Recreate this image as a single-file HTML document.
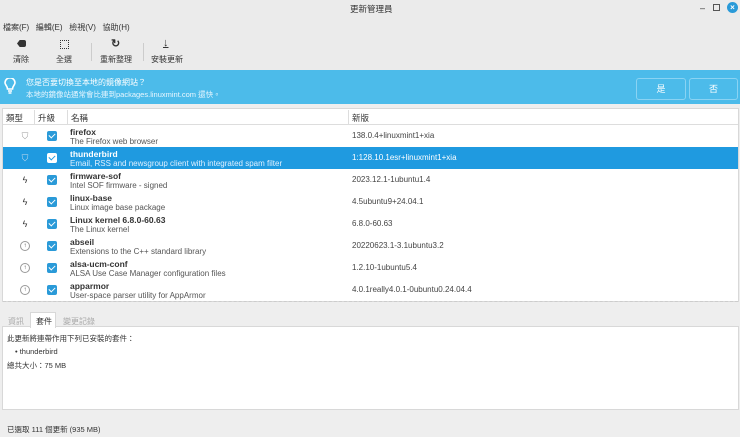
<!DOCTYPE html><html><head><meta charset="utf-8"><style>
*{margin:0;padding:0;box-sizing:border-box}
body{width:740px;height:437px;overflow:hidden;background:#eeeeee;font-family:"Liberation Sans","Noto Sans CJK TC",sans-serif;font-size:8px;color:#333;position:relative}
.a{position:absolute;white-space:nowrap}
.row{position:absolute;left:3px;width:735px;height:22px;background:#fff}
.row.sel{background:#1f9ae0;color:#fff}
.nm{position:absolute;left:67px;top:2px;font-weight:bold;font-size:8.5px}
.ds{position:absolute;left:67px;top:12px;font-size:8px;color:#555}
.sel .ds{color:#e0f0ff}
.vr{position:absolute;left:349px;top:6px;font-size:8px;color:#444}
.sel .vr{color:#fff}
.cb{position:absolute;left:44px;top:6px;width:10px;height:10px;background:#2a9ad8;border-radius:2px}
.sel .cb{background:#fff}
.cb:after{content:"";position:absolute;left:2.5px;top:1px;width:3px;height:5px;border:solid #fff;border-width:0 1.5px 1.5px 0;transform:rotate(45deg)}
.sel .cb:after{border-color:#1f9ae0}
.ic{position:absolute;left:17px;top:6px;width:10px;height:10px;font-size:9px;text-align:center;line-height:10px}
</style></head><body>
<div class="a" style="left:0;top:0;width:740px;height:70px;background:#ebebeb"></div>
<div class="a" style="left:350px;top:3px;font-size:8.5px">更新管理員</div>
<div class="a" style="left:700px;top:3px;font-size:9px">–</div>
<div class="a" style="left:713px;top:4px;width:7px;height:7px;border:1px solid #555"></div>
<div class="a" style="left:727px;top:2px;width:11px;height:11px;border-radius:50%;background:#2a9ad8;color:#fff;font-size:8px;text-align:center;line-height:11px;font-weight:bold">×</div>
<div class="a" style="left:3px;top:22px;font-size:8px">檔案(F)&nbsp;&nbsp;&nbsp;編輯(E)&nbsp;&nbsp;&nbsp;檢視(V)&nbsp;&nbsp;&nbsp;協助(H)</div>
<div class="a" style="left:17px;top:40px;width:9px;height:7px;background:#333;border-radius:1px 2px 2px 1px;clip-path:polygon(30% 0,100% 0,100% 100%,30% 100%,0 50%)"></div>
<div class="a" style="left:13px;top:54px">清除</div>
<div class="a" style="left:60px;top:40px;width:9px;height:9px;border:1px dotted #333"></div>
<div class="a" style="left:56px;top:54px">全選</div>
<div class="a" style="left:91px;top:43px;width:1px;height:18px;background:#ccc"></div>
<div class="a" style="left:111px;top:37px;font-size:11px;font-weight:bold">↻</div>
<div class="a" style="left:100px;top:54px">重新整理</div>
<div class="a" style="left:143px;top:43px;width:1px;height:18px;background:#ccc"></div>
<div class="a" style="left:163px;top:37px;font-size:11px;font-weight:bold;text-decoration:underline">↓</div>
<div class="a" style="left:151px;top:54px">安裝更新</div>
<div class="a" style="left:0;top:70px;width:740px;height:34px;background:#4cbbea"></div>
<svg class="a" style="left:4px;top:78px" width="12" height="16" viewBox="0 0 12 16"><path d="M3.5 11 C3.5 8 1 7 1 4.8 A5 5 0 0 1 11 4.8 C11 7 8.5 8 8.5 11 Z" fill="none" stroke="#fff" stroke-width="1.6"/><path d="M4 13h4M4.5 15h3" stroke="#fff" stroke-width="1.4"/></svg>
<div class="a" style="left:26px;top:77px;color:#fff;font-size:8px">您是否要切換至本地的鏡像網站？</div>
<div class="a" style="left:26px;top:89px;color:#eaf7ff;font-size:7.5px">本地的鏡像站通常會比連到packages.linuxmint.com 還快。</div>
<div class="a" style="left:636px;top:78px;width:50px;height:22px;border:1px solid #8ad3f3;border-radius:3px;color:#fff;text-align:center;line-height:20px;font-size:9px">是</div>
<div class="a" style="left:689px;top:78px;width:49px;height:22px;border:1px solid #8ad3f3;border-radius:3px;color:#fff;text-align:center;line-height:20px;font-size:9px">否</div>
<div class="a" style="left:2px;top:108px;width:737px;height:194px;background:#fff;border:1px solid #d8d8d8"></div>
<div class="a" style="left:3px;top:109px;width:735px;height:16px;border-bottom:1px solid #ddd"></div>
<div class="a" style="left:34px;top:110px;width:1px;height:14px;background:#ddd"></div>
<div class="a" style="left:67px;top:110px;width:1px;height:14px;background:#ddd"></div>
<div class="a" style="left:348px;top:110px;width:1px;height:14px;background:#ddd"></div>
<div class="a" style="left:6px;top:112px;font-size:8.5px">類型</div>
<div class="a" style="left:38px;top:112px;font-size:8.5px">升級</div>
<div class="a" style="left:71px;top:112px;font-size:8.5px">名稱</div>
<div class="a" style="left:352px;top:112px;font-size:8.5px">新版</div>
<div class="row" style="top:125px"><div class="ic" style="color:#999">⛉</div><div class="cb"></div><div class="nm">firefox</div><div class="ds">The Firefox web browser</div><div class="vr">138.0.4+linuxmint1+xia</div></div>
<div class="row sel" style="top:147px"><div class="ic" style="color:#cde">⛉</div><div class="cb"></div><div class="nm">thunderbird</div><div class="ds">Email, RSS and newsgroup client with integrated spam filter</div><div class="vr">1:128.10.1esr+linuxmint1+xia</div></div>
<div class="row" style="top:169px"><div class="ic">ϟ</div><div class="cb"></div><div class="nm">firmware-sof</div><div class="ds">Intel SOF firmware - signed</div><div class="vr">2023.12.1-1ubuntu1.4</div></div>
<div class="row" style="top:191px"><div class="ic">ϟ</div><div class="cb"></div><div class="nm">linux-base</div><div class="ds">Linux image base package</div><div class="vr">4.5ubuntu9+24.04.1</div></div>
<div class="row" style="top:213px"><div class="ic">ϟ</div><div class="cb"></div><div class="nm">Linux kernel 6.8.0-60.63</div><div class="ds">The Linux kernel</div><div class="vr">6.8.0-60.63</div></div>
<div class="row" style="top:235px"><div class="ic" style="border:1px solid #999;border-radius:50%;font-size:6px;line-height:8px">↑</div><div class="cb"></div><div class="nm">abseil</div><div class="ds">Extensions to the C++ standard library</div><div class="vr">20220623.1-3.1ubuntu3.2</div></div>
<div class="row" style="top:257px"><div class="ic" style="border:1px solid #999;border-radius:50%;font-size:6px;line-height:8px">↑</div><div class="cb"></div><div class="nm">alsa-ucm-conf</div><div class="ds">ALSA Use Case Manager configuration files</div><div class="vr">1.2.10-1ubuntu5.4</div></div>
<div class="row" style="top:279px"><div class="ic" style="border:1px solid #999;border-radius:50%;font-size:6px;line-height:8px">↑</div><div class="cb"></div><div class="nm">apparmor</div><div class="ds">User-space parser utility for AppArmor</div><div class="vr">4.0.1really4.0.1-0ubuntu0.24.04.4</div></div>
<div class="a" style="left:3px;top:301px;width:735px;border-top:1px dashed #ccc"></div>
<div class="a" style="left:2px;top:326px;width:737px;height:84px;background:#fff;border:1px solid #d8d8d8"></div>
<div class="a" style="left:30px;top:312px;width:26px;height:16px;background:#fff;border:1px solid #d8d8d8;border-bottom:none"></div>
<div class="a" style="left:8px;top:316px;color:#aaa;font-size:8px">資訊</div>
<div class="a" style="left:36px;top:316px;font-size:8px">套件</div>
<div class="a" style="left:63px;top:316px;color:#aaa;font-size:8px">變更記錄</div>
<div class="a" style="left:7px;top:333px;font-size:7.5px">此更新將連帶作用下列已安裝的套件：</div>
<div class="a" style="left:15px;top:347px;font-size:7.5px">• thunderbird</div>
<div class="a" style="left:7px;top:360px;font-size:7.5px">總共大小：75 MB</div>
<div class="a" style="left:7px;top:424px;font-size:7.5px">已選取 111 個更新 (935 MB)</div>
</body></html>
